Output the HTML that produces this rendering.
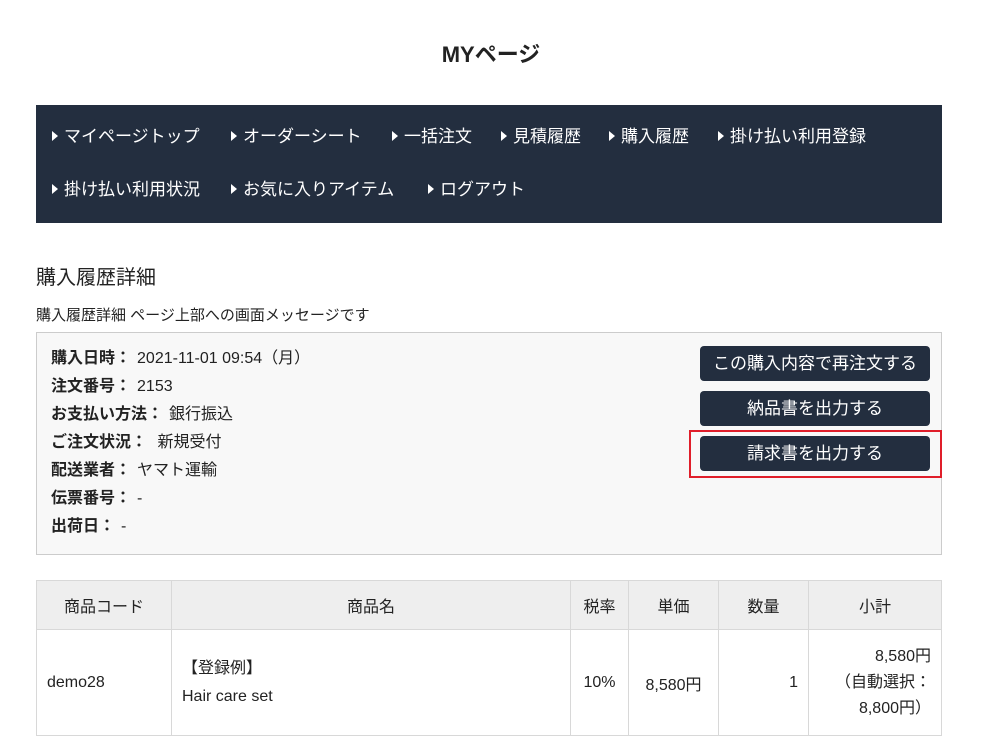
<!DOCTYPE html>
<html><head><meta charset="utf-8"><style>
*{margin:0;padding:0;box-sizing:border-box}
body{width:982px;height:736px;overflow:hidden;background:#fff;font-family:"Liberation Sans","Noto Sans CJK JP",sans-serif;color:#222;position:relative}
.a{position:absolute;white-space:nowrap}
h1{position:absolute;left:0;width:982px;top:40px;text-align:center;font-size:22px;font-weight:bold;line-height:30px}
.nav{position:absolute;left:36px;top:105px;width:906px;height:118px;background:#232e3f}
.nav span{position:absolute;color:#fff;font-size:17px;line-height:24px;white-space:nowrap}
.nav span:before{content:"";display:inline-block;width:0;height:0;border-left:6px solid #fff;border-top:5px solid transparent;border-bottom:5px solid transparent;margin-right:6px;vertical-align:1px}
.box{position:absolute;left:36px;top:332px;width:906px;height:223px;background:#f8f8f8;border:1px solid #ccc}
.row{position:absolute;left:14px;font-size:16px;line-height:22px;white-space:nowrap}
.row b{font-weight:bold;margin-right:6px}
.btn{position:absolute;left:663px;width:230px;height:35px;background:#232e3f;color:#fff;border-radius:4px;font-size:17px;text-align:center;line-height:35px}
.red{position:absolute;left:689px;top:430px;width:253px;height:48px;border:2px solid #e01e2a}
table{position:absolute;left:36px;top:580px;width:906px;border-collapse:collapse;font-size:16px}
td,th{border:1px solid #d8d8d8;font-weight:normal}
th{background:#eee;height:49px}
td{height:106px}
</style></head><body>
<h1>MYページ</h1>
<div class="nav">
<span style="left:16px;top:20px">マイページトップ</span>
<span style="left:195px;top:20px">オーダーシート</span>
<span style="left:356px;top:20px">一括注文</span>
<span style="left:465px;top:20px">見積履歴</span>
<span style="left:573px;top:20px">購入履歴</span>
<span style="left:682px;top:20px">掛け払い利用登録</span>
<span style="left:16px;top:73px">掛け払い利用状況</span>
<span style="left:195px;top:73px">お気に入りアイテム</span>
<span style="left:392px;top:73px">ログアウト</span>
</div>
<div class="a" style="left:36px;top:264px;font-size:20px;line-height:28px">購入履歴詳細</div>
<div class="a" style="left:36px;top:305px;font-size:15px;line-height:22px">購入履歴詳細 ページ上部への画面メッセージです</div>
<div class="box">
<div class="row" style="top:15px"><b>購入日時：</b>2021-11-01 09:54（月）</div>
<div class="row" style="top:43px"><b>注文番号：</b>2153</div>
<div class="row" style="top:71px"><b>お支払い方法：</b>銀行振込</div>
<div class="row" style="top:99px"><b>ご注文状況：</b>  新規受付</div>
<div class="row" style="top:127px"><b>配送業者：</b>ヤマト運輸</div>
<div class="row" style="top:155px"><b>伝票番号：</b>-</div>
<div class="row" style="top:183px"><b>出荷日：</b>-</div>
<div class="btn" style="top:13px">この購入内容で再注文する</div>
<div class="btn" style="top:58px">納品書を出力する</div>
<div class="btn" style="top:103px">請求書を出力する</div>
</div>
<div class="red"></div>
<table>
<tr><th style="width:135px">商品コード</th><th style="width:399px">商品名</th><th style="width:58px">税率</th><th style="width:90px">単価</th><th style="width:90px">数量</th><th>小計</th></tr>
<tr><td style="padding-left:10px">demo28</td><td style="padding-left:10px;line-height:28px">【登録例】<br>Hair care set</td><td style="text-align:center">10%</td><td style="text-align:center">8,580円</td><td style="text-align:right;padding-right:10px">1</td><td style="text-align:right;padding-right:10px;line-height:26px">8,580円<br>（自動選択：<br>8,800円）</td></tr>
</table>
</body></html>
